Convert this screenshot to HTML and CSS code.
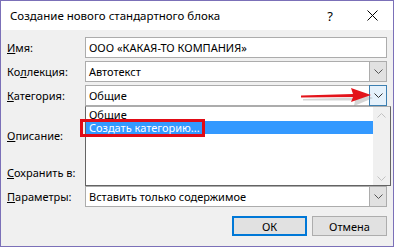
FILE: index.html
```html
<!DOCTYPE html>
<html lang="ru">
<head>
<meta charset="utf-8">
<link rel="stylesheet" href="styles.css">
</head>
<body>
<div class="window">
  <div class="titlebar">
    <span class="title">Создание нового стандартного блока</span>
    <span class="help">?</span>
    <span class="close"><svg width="11" height="11" viewBox="0 0 11 11"><path d="M0.5 0.5L10.5 10.5M10.5 0.5L0.5 10.5" stroke="#000" stroke-width="1"/></svg></span>
  </div>
  <div class="content">
    <div class="row r1">
      <label class="lbl"><u>И</u>мя:</label>
      <div class="field input">ООО «КАКАЯ-ТО КОМПАНИЯ»</div>
    </div>
    <div class="row r2">
      <label class="lbl">Ко<u>л</u>лекция:</label>
      <div class="field combo"><span class="val">Автотекст</span><span class="btn"><svg width="9" height="5" viewBox="0 0 9 5"><path d="M0.5 0.5L4.5 4.5L8.5 0.5" fill="none" stroke="#555" stroke-width="1"/></svg></span></div>
    </div>
    <div class="row r3">
      <label class="lbl"><u>К</u>атегория:</label>
      <div class="field combo focus"><span class="val">Общие</span><span class="btn"><svg width="9" height="5" viewBox="0 0 9 5"><path d="M0.5 0.5L4.5 4.5L8.5 0.5" fill="none" stroke="#333" stroke-width="1"/></svg></span>
        <div class="list">
          <div class="items">
            <div class="item">Общие</div>
            <div class="item sel">Создать категорию...</div>
          </div>
          <div class="scroll">
            <svg width="9" height="5" viewBox="0 0 9 5"><path d="M0.5 4.5L4.5 0.5L8.5 4.5" fill="none" stroke="#c2c2c2" stroke-width="1"/></svg>
            <svg width="9" height="5" viewBox="0 0 9 5"><path d="M0.5 0.5L4.5 4.5L8.5 0.5" fill="none" stroke="#c2c2c2" stroke-width="1"/></svg>
          </div>
          <div class="redbox"></div>
        </div>
        <svg class="arrow" width="80" height="22" viewBox="0 0 80 22">
          <path d="M4 11 L56 9.5 L55 3 L74 10 L55 18 L56 12.5 L4 12.5 Z" fill="#888" opacity="0.35" transform="translate(1,2)"/>
          <path d="M3 9.5 L55 8 L53 2 L73 9 L53 16 L55 11 L3 11.5 Z" fill="#e3141b"/>
        </svg>
      </div>
    </div>
    <div class="row r4">
      <label class="lbl"><u>О</u>писание:</label>
      <div class="field"></div>
    </div>
    <div class="row r5">
      <label class="lbl"><u>С</u>охранить в:</label>
      <div class="field"></div>
    </div>
    <div class="row r6">
      <label class="lbl"><u>П</u>араметры:</label>
      <div class="field combo plain"><span class="val">Вставить только содержимое</span><span class="btn"><svg width="9" height="5" viewBox="0 0 9 5"><path d="M0.5 0.5L4.5 4.5L8.5 0.5" fill="none" stroke="#555" stroke-width="1"/></svg></span></div>
    </div>
    <div class="buttons">
      <button class="b ok">ОК</button>
      <button class="b">Отмена</button>
    </div>
  </div>
</div>
</body>
</html>
```
FILE: styles.css
```css
html, body {
  margin: 0;
  padding: 0;
  background: #ffffff;
}
body {
  width: 398px;
  height: 248px;
  overflow: hidden;
  font-family: "Noto Sans", "Liberation Sans", sans-serif;
  font-size: 11px;
  color: #000;
}
.window {
  width: 392px;
  height: 245px;
  border: 1px solid #7b70b8;
  background: #f0f0f0;
  display: flex;
  flex-direction: column;
}
.titlebar {
  height: 29px;
  background: #ffffff;
  display: flex;
  align-items: center;
  padding-left: 9px;
  box-sizing: border-box;
}
.title {
  flex: 1;
  font-size: 11.5px;
}
.help {
  width: 20px;
  margin-right: 27px;
  text-align: center;
  font-size: 13px;
}
.close {
  width: 11px;
  height: 11px;
  margin-right: 15px;
  display: flex;
}
.content {
  flex: 1;
  padding: 7px 6px 0 6px;
  display: flex;
  flex-direction: column;
}
.row {
  display: flex;
  align-items: center;
  margin-bottom: 3px;
}
.r1, .r2, .r3, .r5, .r6 { height: 21px; }
.r4 { height: 48px; margin-top: 2px; }
.lbl {
  width: 78px;
}
.field {
  flex: 1;
  height: 100%;
  box-sizing: border-box;
  position: relative;
}
.input {
  background: #fff;
  border: 1px solid #acacac;
  padding-left: 3px;
  display: flex;
  align-items: center;
}
.combo {
  background: #fff;
  border: 1px solid #acacac;
  display: flex;
  align-items: center;
}
.combo .val {
  flex: 1;
  padding-left: 3px;
}
.combo .btn {
  width: 17px;
  height: 19px;
  box-sizing: border-box;
  border-left: 1px solid #acacac;
  background: #e1e1e1;
  display: flex;
  align-items: center;
  justify-content: center;
}
.combo.focus .btn {
  background: #e5f1fb;
  border: 1px solid #3c7fb1;
  height: 21px;
  width: 18px;
  margin-right: -1px;
}
.list {
  position: absolute;
  left: -1px;
  top: 20px;
  width: 306px;
  height: 80px;
  box-sizing: border-box;
  border: 1px solid #646464;
  border-top: 1px solid #acacac;
  background: #fff;
  display: flex;
  z-index: 2;
}
.items {
  flex: 1;
  padding-top: 1px;
}
.item {
  height: 13px;
  line-height: 13px;
  padding-left: 3px;
}
.item.sel {
  background: #3399ff;
  color: #fff;
}
.scroll {
  width: 17px;
  background: #f0f0f0;
  display: flex;
  flex-direction: column;
  align-items: center;
  justify-content: space-between;
  padding: 6px 0 4px;
}
.redbox {
  position: absolute;
  left: -6px;
  top: 12px;
  width: 125px;
  height: 18px;
  box-sizing: border-box;
  border: 3px solid #e10b16;
}
.arrow {
  position: absolute;
  left: 212px;
  top: 0px;
  z-index: 3;
}
.buttons {
  display: flex;
  justify-content: flex-end;
  gap: 5px;
  margin-top: 6px;
}
.b {
  width: 75px;
  height: 20px;
  box-sizing: border-box;
  border: 1px solid #adadad;
  background: #e1e1e1;
  font-family: "Noto Sans", "Liberation Sans", sans-serif;
  font-size: 11px;
  color: #000;
  padding: 0;
}
.b.ok {
  border: 2px solid #0078d7;
}
```
